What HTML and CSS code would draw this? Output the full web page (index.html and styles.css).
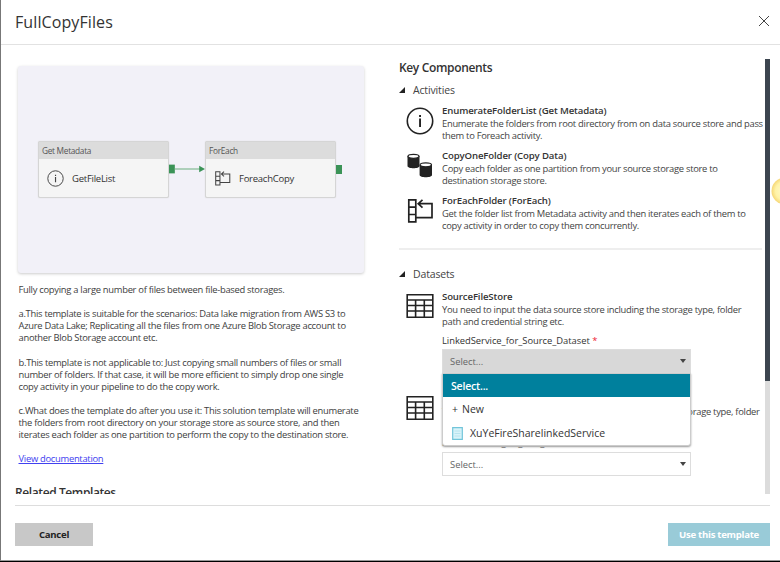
FILE: index.html
```html
<!DOCTYPE html>
<html lang="en">
<head>
<meta charset="utf-8">
<title>FullCopyFiles</title>
<link rel="stylesheet" href="styles.css">
</head>
<body>
<svg class="defs" aria-hidden="true">
  <symbol id="info" viewBox="0 0 28 28"><circle cx="14" cy="14" r="12.7" fill="none" stroke="currentColor" stroke-width="1.6"/><path d="M13.1 8h1.9v2h-1.9zM13.1 11.5h1.9V20h-1.9z" fill="currentColor"/></symbol>
  <symbol id="copy" viewBox="0 0 28 28">
    <path d="M1.5 4v10c0 3 12 3 12 0V4z" fill="#222"/><ellipse cx="7.5" cy="4.3" rx="5.5" ry="2" fill="#fff" stroke="#222" stroke-width="1.2"/>
    <path d="M13.6 13v10c0 3 12.4 3 12.4 0V13z" fill="#222"/><ellipse cx="19.8" cy="12.8" rx="5.7" ry="2" fill="#fff" stroke="#222" stroke-width="1.2"/>
  </symbol>
  <symbol id="each" viewBox="0 0 28 28"><path d="M2.8 2.8h7v22h-7zM2.8 10.2h7M2.8 17.5h7M12 6.7h14V20.7H10M16.5 2.8L12.2 6.7l4.3 3.9" fill="none" stroke="currentColor" stroke-width="1.7"/></symbol>
  <symbol id="table" viewBox="0 0 28 28"><path d="M1.2 2.7h25.6v22.5H1.2zM1.2 8h25.6M1.2 13.5h25.6M1.2 19h25.6M9.6 8v17M18.3 8v17" fill="none" stroke="currentColor" stroke-width="1.6"/></symbol>
</svg>
<div class="modal">
  <header class="header">
    <h1>FullCopyFiles</h1>
    <svg class="close" viewBox="0 0 12 12"><path d="M1 1l10 10M11 1L1 11" fill="none" stroke="#444" stroke-width="1"/></svg>
  </header>
  <main class="body">
    <section class="left">
      <div class="preview">
        <div class="node">
          <div class="node-head">Get Metadata</div>
          <div class="node-body"><svg class="mini"><use href="#info"/></svg><span>GetFileList</span></div>
        </div>
        <svg class="link" viewBox="0 0 37 12"><path d="M0 1.5h6v9H0z" fill="#3b9357"/><path d="M6 6h26" stroke="#7db78f" stroke-width="1.2"/><path d="M31 2.6L37 6l-6 3.4z" fill="#3b9357"/></svg>
        <div class="node">
          <div class="node-head">ForEach</div>
          <div class="node-body"><svg class="mini"><use href="#each"/></svg><span>ForeachCopy</span></div>
        </div>
        <i class="port"></i>
      </div>
      <div class="desc">
        <p>Fully copying a large number of files between file-based storages.</p>
        <p>a.This template is suitable for the scenarios: Data lake migration from AWS S3 to<br>Azure Data Lake; Replicating all the files from one Azure Blob Storage account to<br>another Blob Storage account etc.</p>
        <p>b.This template is not applicable to: Just copying small numbers of files or small<br>number of folders. If that case, it will be more efficient to simply drop one single<br>copy activity in your pipeline to do the copy work.</p>
        <p>c.What does the template do after you use it: This solution template will enumerate<br>the folders from root directory on your storage store as source store, and then<br>iterates each folder as one partition to perform the copy to the destination store.</p>
        <a href="#">View documentation</a>
      </div>
      <h2 class="related">Related Templates</h2>
    </section>
    <section class="right">
      <h2>Key Components</h2>
      <h3><i class="tri"></i>Activities</h3>
      <div class="item"><svg class="icon"><use href="#info"/></svg><div><h4>EnumerateFolderList (Get Metadata)</h4><p>Enumerate the folders from root directory from on data source store and pass<br>them to Foreach activity.</p></div></div>
      <div class="item"><svg class="icon"><use href="#copy"/></svg><div><h4>CopyOneFolder (Copy Data)</h4><p>Copy each folder as one partition from your source storage store to<br>destination storage store.</p></div></div>
      <div class="item"><svg class="icon"><use href="#each"/></svg><div><h4>ForEachFolder (ForEach)</h4><p>Get the folder list from Metadata activity and then iterates each of them to<br>copy activity in order to copy them concurrently.</p></div></div>
      <hr>
      <h3><i class="tri"></i>Datasets</h3>
      <div class="item dataset">
        <svg class="icon"><use href="#table"/></svg>
        <div><h4>SourceFileStore</h4><p>You need to input the data source store including the storage type, folder<br>path and credential string etc.</p>
          <label>LinkedService_for_Source_Dataset <b>*</b></label>
          <div class="select open"><span>Select...</span><i class="caret"></i>
            <div class="menu">
              <div class="opt active">Select...</div>
              <div class="opt"><span class="plus">+</span>New</div>
              <div class="opt"><svg class="file" viewBox="0 0 11 13"><path d="M.7.7h9.6v11.6H.7z" fill="#d9f3f9" stroke="#72c5da" stroke-width="1.2"/><path d="M2.5 4h6M2.5 6.5h6M2.5 9h6" stroke="#b7e4ef"/></svg>XuYeFireSharelinkedService</div>
            </div>
          </div>
        </div>
      </div>
      <div class="item dataset sink">
        <svg class="icon"><use href="#table"/></svg>
        <div><h4>SinkFileStore</h4><p>You need to input the data destination store including the storage type, folder<br>path and credential string etc.</p>
          <label>LinkedService_for_Sink_Dataset</label>
          <div class="select"><span>Select...</span><i class="caret"></i></div>
        </div>
      </div>
    </section>
    <div class="track"><div class="thumb"></div></div>
  </main>
  <footer class="footer">
    <button class="cancel">Cancel</button>
    <button class="use">Use this template</button>
  </footer>
  <svg class="bulb" viewBox="0 0 9 28"><defs><radialGradient id="glow"><stop offset="0" stop-color="#fffbd0"/><stop offset=".7" stop-color="#fff3a8"/><stop offset="1" stop-color="#f6d776"/></radialGradient></defs><circle cx="14" cy="14" r="13.5" fill="url(#glow)"/></svg>
</div>
</body>
</html>
```
FILE: styles.css
```css
* { box-sizing: border-box; }
body { margin: 0; width: 780px; height: 562px; overflow: hidden; background: #000; font-family: "Open Sans", "Noto Sans", sans-serif; color: #333; }
h1, h2, h3, h4, p { margin: 0; font-weight: 400; white-space: nowrap; }
.defs { position: absolute; width: 0; height: 0; }
.modal { position: relative; height: 561px; background: #fff; border-left: 1px solid #777; border-bottom: 1px solid #999; display: flex; flex-direction: column; overflow: hidden; }
.header { height: 45px; flex: none; display: flex; justify-content: space-between; align-items: center; border-bottom: 1px solid #e2e2e2; padding: 0 10px 2px 14px; }
h1 { font-size: 16px; line-height: 24px; color: #333; letter-spacing: .1px; padding-top: 1px; }
.close { width: 12px; height: 12px; }
.body { height: 449px; flex: none; display: flex; overflow: hidden; }
.left { width: 398px; flex: none; padding: 21px 0 0 14px; }
.preview { width: 346px; height: 207px; margin-left: 2.5px; background: #f2f1f8; border-radius: 3px; box-shadow: 0 1px 3px #ccc; padding: 75px 0 0 20.5px; display: flex; align-items: flex-start; }
.node { width: 131px; height: 57px; flex: none; border: 1px solid #d5d5d5; border-radius: 2px; background: #f5f5f5; box-shadow: 0 0 1px #ccc; }
.node-head { height: 17px; background: #dcdcdc; color: #555; font-size: 8.3px; line-height: 17px; padding-left: 3px; letter-spacing: -.3px; }
.node-body { height: 39px; display: flex; align-items: center; gap: 8px; padding-left: 8px; font-size: 9.5px; letter-spacing: -.25px; }
.mini { width: 17px; height: 17px; color: #444; }
.link { width: 36px; height: 12px; margin-top: 22px; flex: none; }
.port { width: 6px; height: 9px; background: #3b9357; margin-top: 24px; }
.desc { padding: 11px 0 0 3.5px; font-size: 9.4px; line-height: 12.12px; color: #404040; letter-spacing: -.28px; }
.desc p { margin-bottom: 12.12px; }
.desc a { display: block; color: #4141f0; margin-top: -1px; }
.related { font-size: 12px; line-height: 16px; font-weight: 600; margin-top: 20px; letter-spacing: -.4px; }
.right { width: 363px; flex: none; padding-top: 14px; }
.right h2 { font-size: 12px; line-height: 18px; font-weight: 600; letter-spacing: -.35px; }
h3 { display: flex; align-items: center; font-size: 10.5px; line-height: 16px; height: 16px; margin-top: 5px; color: #444; letter-spacing: -.15px; }
.tri { width: 6px; height: 6px; margin-right: 8px; background: #222; clip-path: polygon(100% 0, 100% 100%, 0 100%); }
.item { display: flex; height: 45px; padding-left: 7px; gap: 8px; }
h3 + .item { margin-top: 6px; }
.icon { width: 28px; height: 28px; flex: none; margin-top: 3px; color: #222; }
h4 { font-size: 9.6px; line-height: 14px; font-weight: 600; letter-spacing: -.13px; }
.item p { font-size: 9.4px; line-height: 12px; color: #444; letter-spacing: -.28px; }
hr { width: 363px; height: 2px; border: 0; margin: 9px 0 0; background: #eee; }
hr + h3 { margin-top: 16px; }
h3 + .dataset { margin-top: 8px; }
.dataset { height: 102px; }
.dataset .icon { margin-top: 2px; }
label { display: block; height: 16px; margin-top: 5px; font-size: 9.4px; line-height: 16px; color: #333; white-space: nowrap; letter-spacing: -.03px; }
.sink label { height: 17px; }
label b { color: #e23; font-weight: 400; }
.select { position: relative; width: 249px; height: 24px; border: 1px solid #ddd; display: flex; align-items: center; justify-content: space-between; padding: 0 4px 0 7px; font-size: 9.4px; color: #666; }
.open { background: #d8d8d8; }
.caret { border: 3px solid transparent; border-top: 4px solid #444; border-bottom: 0; }
.menu { position: absolute; z-index: 2; left: -1px; top: 23px; width: 249px; height: 73px; background: #fff; border: 1px solid #ccc; border-radius: 0 0 3px 3px; box-shadow: 0 1px 2px #999; }
.opt { height: 24px; display: flex; align-items: center; padding-left: 9px; font-size: 10.5px; color: #333; }
.active { height: 23px; padding-left: 8px; background: #00809d; color: #fff; font-weight: 600; letter-spacing: -.2px; }
.plus { margin-right: 4px; }
.file { width: 11px; height: 13px; margin-right: 7px; }
.track { width: 5px; height: 435px; margin: 14px 0 0 3px; background: #dcdcdc; }
.thumb { height: 322px; background: #3c454f; }
.footer { margin: 11px 10px 0 14px; border-top: 1px solid #ddd; padding-top: 17px; display: flex; justify-content: space-between; }
button { height: 23px; border: 0; padding: 0; font: 700 9.6px "Open Sans", sans-serif; letter-spacing: -.28px; }
.cancel { width: 78px; background: #c8c8c8; color: #222; }
.use { width: 102px; background: #99cbd8; color: #fff; }
.bulb { position: absolute; right: 0; top: 177px; width: 9px; height: 28px; }
```
